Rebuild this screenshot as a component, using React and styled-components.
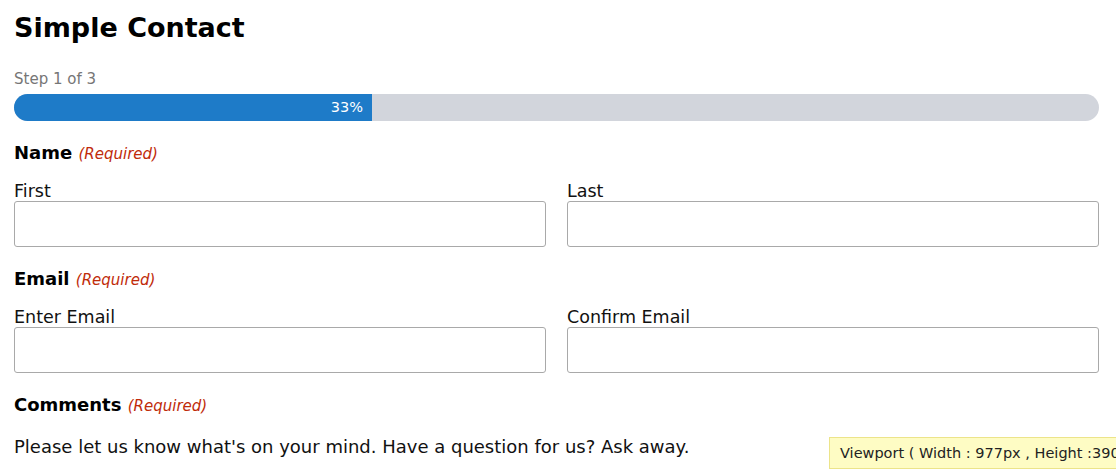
import React from "react";
import styled, { createGlobalStyle } from "styled-components";

const GlobalStyle = createGlobalStyle`
  html, body {
    margin: 0;
    padding: 0;
    background: #ffffff;
    overflow: hidden;
  }
  body {
    font-family: "DejaVu Sans", "Liberation Sans", sans-serif;
    color: #111;
  }
`;

const App = () => {
  return (
    <Page>
      <GlobalStyle />
      <Title>Simple Contact</Title>
      <StepText>Step 1 of 3</StepText>
      <ProgressTrack>
        <ProgressFill style={{ width: "33%" }}>33%</ProgressFill>
      </ProgressTrack>

      <FieldGroup>
        <GroupLabel>
          Name <Required>(Required)</Required>
        </GroupLabel>
        <Row>
          <Col>
            <SubLabel>First</SubLabel>
            <Input type="text" />
          </Col>
          <Col>
            <SubLabel>Last</SubLabel>
            <Input type="text" />
          </Col>
        </Row>
      </FieldGroup>

      <FieldGroup>
        <GroupLabel>
          Email <Required>(Required)</Required>
        </GroupLabel>
        <Row>
          <Col>
            <SubLabel>Enter Email</SubLabel>
            <Input type="email" />
          </Col>
          <Col>
            <SubLabel>Confirm Email</SubLabel>
            <Input type="email" />
          </Col>
        </Row>
      </FieldGroup>

      <FieldGroup>
        <GroupLabel>
          Comments <Required>(Required)</Required>
        </GroupLabel>
        <Description>
          Please let us know what's on your mind. Have a question for us? Ask away.
        </Description>
      </FieldGroup>

      <ViewportBadge>Viewport ( Width : 977px , Height :390px )</ViewportBadge>
    </Page>
  );
};

export default App;

const Page = styled.div`
  position: relative;
  width: 1116px;
  height: 474px;
  box-sizing: border-box;
  padding: 10px 17px 0 14px;
`;

const Title = styled.h1`
  margin: 0;
  font-size: 27px;
  font-weight: 700;
  line-height: 36px;
  color: #000;
`;

const StepText = styled.div`
  margin-top: 24px;
  font-size: 15px;
  line-height: 18px;
  color: #767676;
`;

const ProgressTrack = styled.div`
  margin-top: 6px;
  height: 27px;
  border-radius: 14px;
  background: #d2d5dc;
  overflow: hidden;
`;

const ProgressFill = styled.div`
  height: 100%;
  box-sizing: border-box;
  background: #1e7bc8;
  color: #fff;
  font-size: 14.5px;
  line-height: 27px;
  text-align: right;
  padding-right: 9px;
`;

const FieldGroup = styled.div`
  margin-top: 21px;
`;

const GroupLabel = styled.div`
  font-size: 18px;
  font-weight: 700;
  line-height: 22px;
  color: #000;
`;

const Required = styled.span`
  font-size: 15px;
  font-weight: 400;
  font-style: italic;
  color: #c02b0a;
`;

const Row = styled.div`
  display: grid;
  grid-template-columns: 1fr 1fr;
  column-gap: 21px;
  margin-top: 16px;
`;

const Col = styled.div`
  display: flex;
  flex-direction: column;
`;

const SubLabel = styled.label`
  font-size: 17.5px;
  line-height: 20px;
  color: #111;
`;

const Input = styled.input`
  margin: 0;
  height: 46px;
  box-sizing: border-box;
  border: 1px solid #a9a9a9;
  border-radius: 3px;
  background: #fff;
  font-family: inherit;
`;

const Description = styled.p`
  margin: 19px 0 0;
  font-size: 18px;
  line-height: 22px;
  color: #111;
`;

const ViewportBadge = styled.div`
  position: absolute;
  left: 829px;
  top: 437px;
  white-space: nowrap;
  padding: 6px 10px;
  font-size: 14.5px;
  line-height: 18px;
  color: #222;
  background: #fefcc4;
  border: 1px solid #ece48a;
`;
